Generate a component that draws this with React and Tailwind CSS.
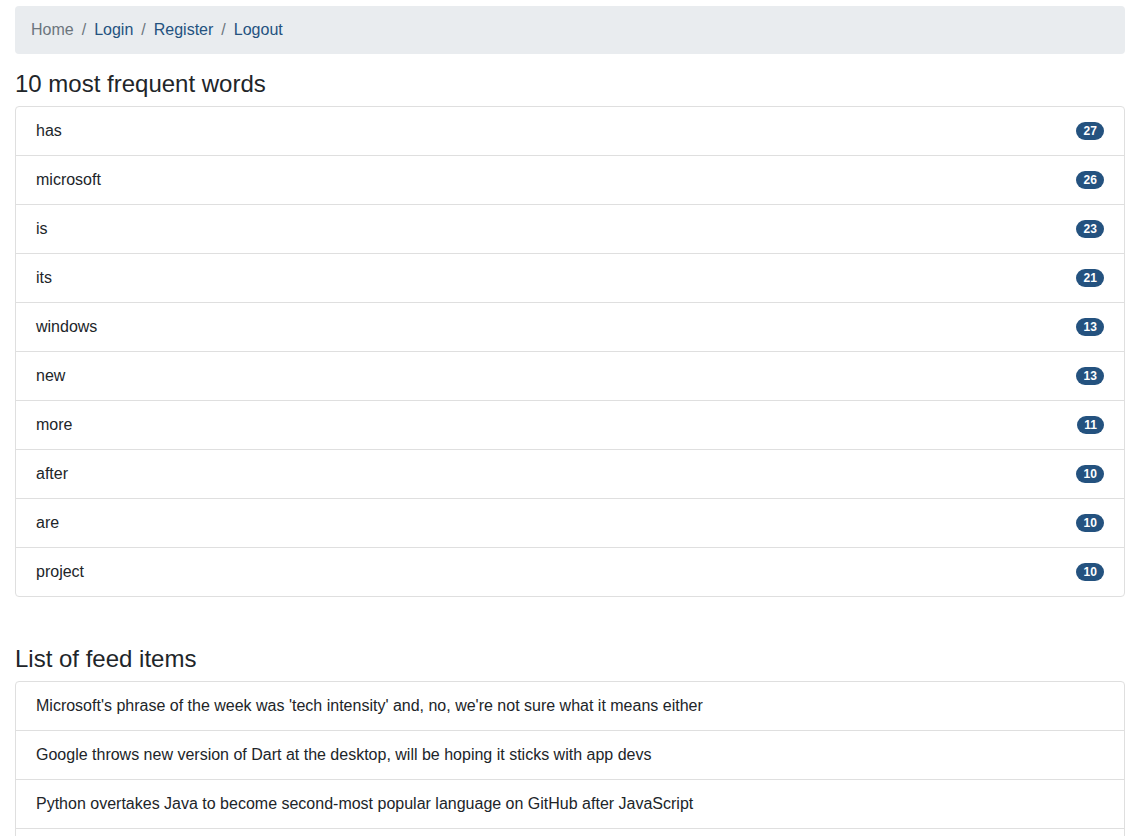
import React from "react";

const words = [
  ["has", 27],
  ["microsoft", 26],
  ["is", 23],
  ["its", 21],
  ["windows", 13],
  ["new", 13],
  ["more", 11],
  ["after", 10],
  ["are", 10],
  ["project", 10],
];

const feed = [
  "Microsoft's phrase of the week was 'tech intensity' and, no, we're not sure what it means either",
  "Google throws new version of Dart at the desktop, will be hoping it sticks with app devs",
  "Python overtakes Java to become second-most popular language on GitHub after JavaScript",
  "Windows 10 October 2018 Update is back, and it has stopped deleting your files",
];

export default function App() {
  return (
    <div
      className="h-[836px] overflow-hidden bg-white pl-[15px] pr-[22px] pt-[6px] text-[16px] leading-[24px] text-[#212529]"
      style={{ fontFamily: '"Liberation Sans", Arial, sans-serif' }}
    >
      <nav className="mb-4 flex items-center rounded-[4px] bg-[#e9ecef] px-4 py-3">
        <span className="text-[#6c757d]">Home</span>
        <span className="px-2 text-[#6c757d]">/</span>
        <a className="text-[#24527f]">Login</a>
        <span className="px-2 text-[#6c757d]">/</span>
        <a className="text-[#24527f]">Register</a>
        <span className="px-2 text-[#6c757d]">/</span>
        <a className="text-[#24527f]">Logout</a>
      </nav>

      <h4 className="mb-[7px] text-[24px] font-normal leading-[28.8px]">10 most frequent words</h4>
      <ul className="mb-12 flex flex-col rounded-[4px] border border-[#dfdfdf]">
        {words.map(([w, n], i) => (
          <li
            key={w}
            className={`flex items-center justify-between px-5 py-3 ${i > 0 ? "border-t border-[#dfdfdf]" : ""}`}
          >
            <span>{w}</span>
            <span className="rounded-full bg-[#24527f] px-[7.2px] py-[3px] text-[12px] font-bold leading-[12px] text-white">
              {n}
            </span>
          </li>
        ))}
      </ul>

      <h4 className="mb-[7px] text-[24px] font-normal leading-[28.8px]">List of feed items</h4>
      <ul className="flex flex-col rounded-[4px] border border-[#dfdfdf]">
        {feed.map((f, i) => (
          <li key={i} className={`px-5 py-3 ${i > 0 ? "border-t border-[#dfdfdf]" : ""}`}>
            {f}
          </li>
        ))}
      </ul>
    </div>
  );
}
